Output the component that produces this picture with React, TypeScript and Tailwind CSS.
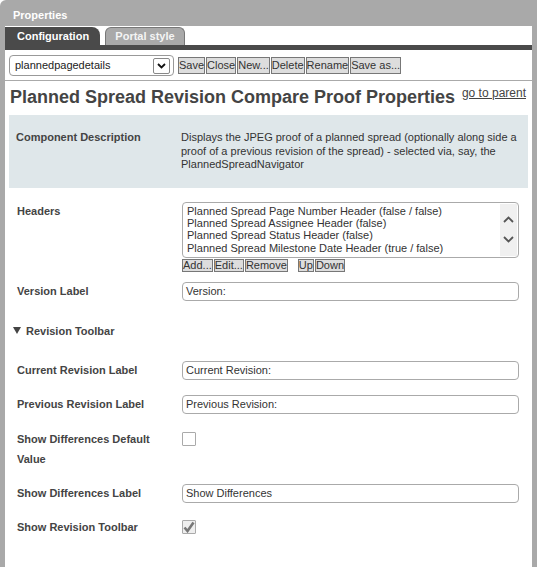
import type { ReactNode } from 'react';

const TOOLBAR_BUTTONS = ['Save', 'Close', 'New...', 'Delete', 'Rename', 'Save as...'];

const HEADERS = [
  'Planned Spread Page Number Header (false / false)',
  'Planned Spread Assignee Header (false)',
  'Planned Spread Status Header (false)',
  'Planned Spread Milestone Date Header (true / false)',
];

const Row = ({ label, children, className = '' }: { label: ReactNode; children: ReactNode; className?: string }) => (
  <div className={`flex pl-[8px] pr-[9px] ${className}`}>
    <div className="w-[165px] shrink-0 pr-[14px] text-[11px] leading-[20px] font-bold text-[#444]">{label}</div>
    <div className="flex-1">{children}</div>
  </div>
);

const TextInput = ({ value }: { value: string }) => (
  <div className="mt-[1px] h-[19px] rounded-[4px] border border-[#aaa] px-[3px] text-[11px] leading-[17px] text-[#333]">
    {value}
  </div>
);

const Checkbox = ({ checked = false }: { checked?: boolean }) => (
  <div
    className={`mt-[3px] w-[14px] h-[14px] rounded-[1px] border border-[#aaa] flex items-center justify-center ${
      checked ? 'bg-[#eee]' : 'bg-white'
    }`}
  >
    {checked && (
      <svg width="12" height="12" viewBox="0 0 12 12">
        <path d="M1.5 6.5 L4.5 10 L10.5 1.5" fill="none" stroke="#777" strokeWidth="2.6" />
      </svg>
    )}
  </div>
);

const SmallButton = ({ children, className = '' }: { children: ReactNode; className?: string }) => (
  <button className={`h-[13px] border border-[#777] bg-[#ddd] px-0 text-[11px] leading-[11px] text-[#333] ${className}`}>
    {children}
  </button>
);

export default function App() {
  return (
    <div className="w-[537px] h-[567px] overflow-hidden bg-[#a9a9a9] rounded-tl-[6px] px-[5px] flex flex-col font-['Liberation_Sans',Arial,sans-serif]">
      <div className="h-[26px] pt-[4px] pl-[8px] flex items-center text-[11px] font-bold text-white">Properties</div>

      <div className="flex-1 bg-white flex flex-col">
        {/* tabs */}
        <div className="h-[19px] flex items-end">
          <div className="h-[18px] w-[95px] bg-[#4a4a4a] rounded-tr-[8px] pl-[12px] flex items-center text-[11px] font-bold text-white">
            Configuration
          </div>
          <div className="ml-[5px] h-[18px] w-[80px] bg-[#a9a9a9] border border-b-0 border-[#777] rounded-t-[6px] flex items-center justify-center text-[11px] font-bold text-[#f4f4f4]">
            Portal style
          </div>
        </div>
        <div className="h-[5px] bg-[#4a4a4a]" />

        {/* toolbar */}
        <div className="pt-[5px] px-[4px] flex items-center">
          <div className="w-[165px] h-[21px] rounded-[4px] border border-[#999] flex items-center pl-[5px] pr-[3px]">
            <span className="flex-1 text-[11px] text-[#222]">plannedpagedetails</span>
            <span className="w-[17px] h-[16px] rounded-[2px] border border-[#888] flex items-center justify-center">
              <svg width="9" height="6" viewBox="0 0 9 6">
                <path d="M1 1 L4.5 4.5 L8 1" fill="none" stroke="#111" strokeWidth="1.8" />
              </svg>
            </span>
          </div>
          <div className="ml-[4px] flex gap-[1px]">
            {TOOLBAR_BUTTONS.map((b) => (
              <button key={b} className="h-[17px] border border-[#777] bg-[#ddd] px-0 text-[11px] leading-[15px] text-[#333]">
                {b}
              </button>
            ))}
          </div>
        </div>
        <div className="mt-[4px] h-px bg-[#aaa]" />

        {/* title */}
        <div className="h-[34px] pt-[5px] pl-[5px] pr-[6px] flex items-start justify-between">
          <h1 className="text-[18px] leading-[22px] font-bold text-[#444]">Planned Spread Revision Compare Proof Properties</h1>
          <a className="text-[12px] leading-[14px] text-[#444] underline">go to parent</a>
        </div>

        <div className="px-[4px]">
          {/* description */}
          <div className="bg-[#dfe7ea] pt-[16px] pb-[16px] flex text-[11px] leading-[13.5px]">
            <div className="w-[172px] shrink-0 pl-[7px] font-bold text-[#444]">Component Description</div>
            <div className="flex-1 pr-[7px] text-[#333]">
              Displays the JPEG proof of a planned spread (optionally along side a proof of a previous revision of the
              spread) - selected via, say, the PlannedSpreadNavigator
            </div>
          </div>

          {/* headers */}
          <Row label="Headers" className="mt-[13px]">
            <div className="mt-[1px] h-[56px] rounded-[4px] border border-[#aaa] flex">
              <div className="flex-1 pt-[2px] pl-[4px] text-[11px] leading-[12.4px] text-[#333]">
                {HEADERS.map((h) => (
                  <div key={h}>{h}</div>
                ))}
              </div>
              <div className="my-[1px] mr-[1px] w-[17px] bg-[#f0f0f0] flex flex-col items-center justify-around py-[6px]">
                <svg width="11" height="7" viewBox="0 0 11 7">
                  <path d="M1 6 L5.5 1.5 L10 6" fill="none" stroke="#555" strokeWidth="1.8" />
                </svg>
                <svg width="11" height="7" viewBox="0 0 11 7">
                  <path d="M1 1 L5.5 5.5 L10 1" fill="none" stroke="#555" strokeWidth="1.8" />
                </svg>
              </div>
            </div>
            <div className="mt-[1px] flex gap-[1px]">
              <SmallButton>Add...</SmallButton>
              <SmallButton>Edit...</SmallButton>
              <SmallButton>Remove</SmallButton>
              <SmallButton className="ml-[9px]">Up</SmallButton>
              <SmallButton>Down</SmallButton>
            </div>
          </Row>

          <Row label="Version Label" className="mt-[9px]">
            <TextInput value="Version:" />
          </Row>

          <div className="mt-[20px] pl-[4px] flex items-center gap-[5px] text-[11px] leading-[20px] font-bold text-[#444]">
            <svg width="8" height="7" viewBox="0 0 8 7">
              <path d="M0 0 H8 L4 7 Z" fill="#444" />
            </svg>
            Revision Toolbar
          </div>

          <Row label="Current Revision Label" className="mt-[19px]">
            <TextInput value="Current Revision:" />
          </Row>
          <Row label="Previous Revision Label" className="mt-[14px]">
            <TextInput value="Previous Revision:" />
          </Row>
          <Row label="Show Differences Default Value" className="mt-[15px]">
            <Checkbox />
          </Row>
          <Row label="Show Differences Label" className="mt-[14px]">
            <TextInput value="Show Differences" />
          </Row>
          <Row label="Show Revision Toolbar" className="mt-[14px]">
            <Checkbox checked />
          </Row>
        </div>
      </div>
    </div>
  );
}
